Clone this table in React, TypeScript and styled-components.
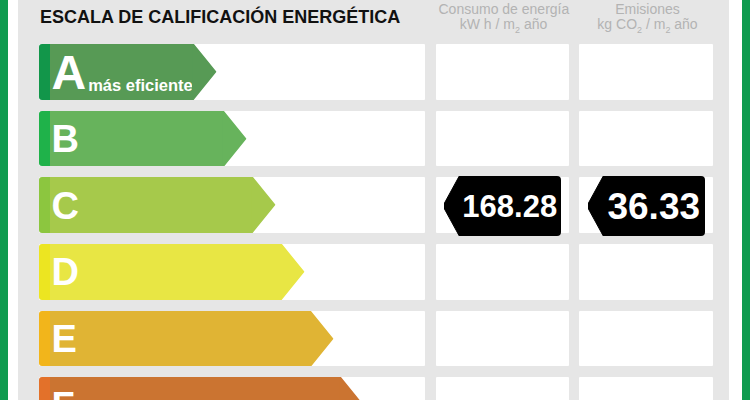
import React from "react";
import styled, { createGlobalStyle } from "styled-components";

const GlobalStyle = createGlobalStyle`
  html, body { margin: 0; padding: 0; background: #ffffff; overflow: hidden; }
  body { font-family: "Liberation Sans", Arial, sans-serif; }
`;

const Frame = styled.div`
  display: flex;
  min-height: 440px;
  border-left: 8px solid #0f9b4f;
  border-right: 8px solid #0f9b4f;
  padding: 0 13px 0 10px;
  background: #ffffff;
`;

const Panel = styled.div`
  flex: 1;
  background: #e6e6e6;
  display: grid;
  grid-template-columns: 386px 133px 134px;
  grid-template-rows: 32.9px repeat(6, 55.6px);
  column-gap: 10.5px;
  row-gap: 11.1px;
  padding: 0 16px 30px 21px;
`;

const Title = styled.h1`
  margin: 0;
  padding: 7.5px 0 0 1px;
  font-size: 18px;
  line-height: 18px;
  font-weight: 700;
  color: #111111;
  white-space: nowrap;
`;

const ColHead = styled.div`
  padding: 2px 0 0 3px;
  font-size: 14px;
  line-height: 14.5px;
  color: #b3b3b3;
  text-align: center;
  white-space: nowrap;
`;

const Sub = styled.sub`
  font-size: 9px;
  line-height: 0;
  vertical-align: -4px;
`;

const Cell = styled.div`
  background: #ffffff;
  display: flex;
  align-items: center;
  justify-content: center;
  border-radius: 1px;
`;

const BarCell = styled(Cell)`
  justify-content: flex-start;
  align-items: stretch;
`;

const Bar = styled.div<{ $width: number }>`
  display: flex;
  width: ${(p) => p.$width}px;
  height: 100%;
`;

const Stripe = styled.div<{ $color: string }>`
  width: 10.5px;
  flex: none;
  background: ${(p) => p.$color};
  border-radius: 3px 0 0 3px;
`;

const BarBody = styled.div<{ $color: string }>`
  flex: 1;
  background: ${(p) => p.$color};
  display: flex;
  align-items: center;
  padding: 1px 0 0 2px;
  color: #ffffff;
  font-weight: 700;
  white-space: nowrap;
`;

const Letter = styled.span<{ $big?: boolean }>`
  font-size: ${(p) => (p.$big ? 48 : 38)}px;
  line-height: 1;
  padding-top: ${(p) => (p.$big ? 2 : 0)}px;
`;

const Note = styled.span`
  font-size: 16.5px;
  margin-left: 2px;
  align-self: flex-end;
  padding-bottom: 5px;
`;

const TipSvg = styled.svg`
  flex: none;
  width: 25px;
  height: 100%;
  margin-left: -0.5px;
  display: block;
`;

const Tag = styled.div`
  display: flex;
  width: 118px;
  height: 60px;
  flex: none;
  margin-top: 1px;
`;

const TagTip = styled.svg`
  flex: none;
  width: 16px;
  height: 60px;
  display: block;
  margin-right: -0.5px;
`;

const TagBody = styled.div<{ $size: number }>`
  flex: 1;
  background: #000000;
  border-radius: 0 4px 4px 0;
  display: flex;
  align-items: center;
  justify-content: center;
  color: #ffffff;
  font-weight: 700;
  font-size: ${(p) => p.$size}px;
  line-height: 1;
  padding-top: 1px;
`;

type Rating = {
  letter: string;
  width: number;
  stripe: string;
  color: string;
  note?: string;
  energy?: { value: string; size: number };
  co2?: { value: string; size: number };
};

const ratings: Rating[] = [
  { letter: "A", width: 178, stripe: "#12964a", color: "#579a55", note: "más eficiente" },
  { letter: "B", width: 208, stripe: "#1fb24a", color: "#67b35c" },
  {
    letter: "C",
    width: 237,
    stripe: "#8cc63f",
    color: "#a6c94b",
    energy: { value: "168.28", size: 31 },
    co2: { value: "36.33", size: 37 },
  },
  { letter: "D", width: 266, stripe: "#ece521", color: "#e8e644" },
  { letter: "E", width: 295, stripe: "#f2b51b", color: "#e0b434" },
  { letter: "F", width: 325, stripe: "#e3712a", color: "#cb7431" },
];

const ArrowTip = ({ color }: { color: string }) => (
  <TipSvg viewBox="0 0 25 56" preserveAspectRatio="none">
    <polygon
      points="0,0 1,0 23.5,28 1,56 0,56"
      fill={color}
      stroke={color}
      strokeWidth={1.5}
      strokeLinejoin="round"
    />
  </TipSvg>
);

const ValueTag = ({ value, size }: { value: string; size: number }) => (
  <Tag>
    <TagTip viewBox="0 0 16 60">
      <polygon
        points="16,0.5 1.5,27 1.5,33 16,59.5"
        fill="#000"
        stroke="#000"
        strokeWidth={1}
        strokeLinejoin="round"
      />
    </TagTip>
    <TagBody $size={size}>{value}</TagBody>
  </Tag>
);

export default function App() {
  return (
    <>
      <GlobalStyle />
      <Frame>
        <Panel>
          <Title>ESCALA DE CALIFICACIÓN ENERGÉTICA</Title>
          <ColHead>
            Consumo de energía
            <br />
            kW h / m<Sub>2</Sub> año
          </ColHead>
          <ColHead>
            Emisiones
            <br />
            kg CO<Sub>2</Sub> / m<Sub>2</Sub> año
          </ColHead>
          {ratings.map((r) => (
            <React.Fragment key={r.letter}>
              <BarCell>
                <Bar $width={r.width}>
                  <Stripe $color={r.stripe} />
                  <BarBody $color={r.color}>
                    <Letter $big={!!r.note}>{r.letter}</Letter>
                    {r.note && <Note>{r.note}</Note>}
                  </BarBody>
                  <ArrowTip color={r.color} />
                </Bar>
              </BarCell>
              <Cell>{r.energy && <ValueTag value={r.energy.value} size={r.energy.size} />}</Cell>
              <Cell>{r.co2 && <ValueTag value={r.co2.value} size={r.co2.size} />}</Cell>
            </React.Fragment>
          ))}
        </Panel>
      </Frame>
    </>
  );
}
